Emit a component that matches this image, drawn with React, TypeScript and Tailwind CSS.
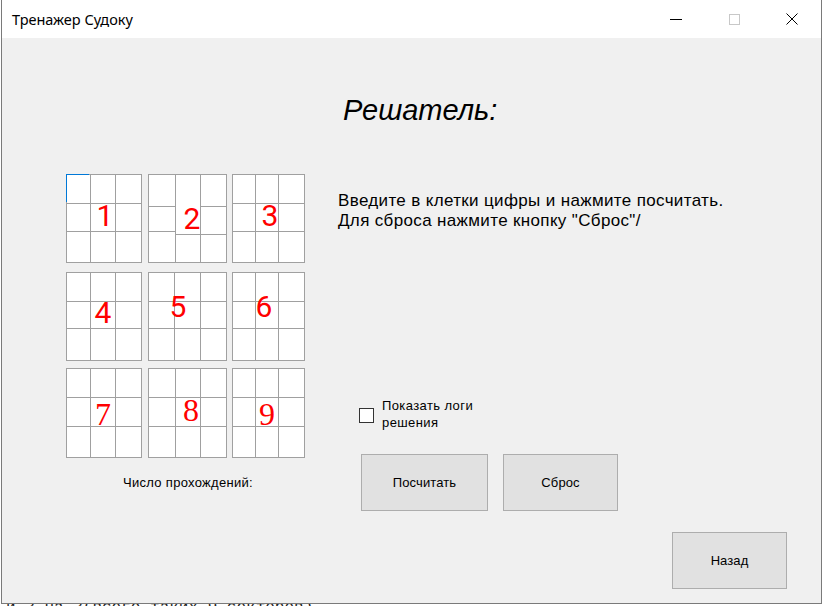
import React from 'react';

type Block = {
    cols: number[];
    rows: number[][];
    num: string;
    nx: number;
    ny: number;
    serif?: boolean;
    focus?: boolean;
};

const r1 = [28, 27, 30];
const r2 = [28, 26, 31];
const r3 = [28, 28, 30];

const blockRows: Block[][] = [
    [
        { cols: [23, 24, 25], rows: [r1, r1, r1], num: '1', nx: 39, ny: 42, focus: true },
        { cols: [26, 24, 25], rows: [[31, 24, 30], [59, 27], [31, 27, 27]], num: '2', nx: 44, ny: 45 },
        { cols: [22, 22, 25], rows: [r1, r1, r1], num: '3', nx: 38, ny: 42 },
    ],
    [
        { cols: [23, 24, 25], rows: [r2, r2, r2], num: '4', nx: 37, ny: 41 },
        { cols: [25, 25, 25], rows: [r2, r2, r2], num: '5', nx: 30, ny: 35 },
        { cols: [22, 22, 25], rows: [r2, r2, r2], num: '6', nx: 32, ny: 35 },
    ],
    [
        { cols: [23, 24, 25], rows: [r3, r3, r3], num: '7', nx: 37, ny: 46, serif: true },
        { cols: [26, 24, 25], rows: [r3, r3, r3], num: '8', nx: 43, ny: 42, serif: true },
        { cols: [22, 22, 25], rows: [r3, r3, r3], num: '9', nx: 35, ny: 46, serif: true },
    ],
];

const Sector: React.FC<{ b: Block }> = ({ b }) => {
    return (
        <div className="relative flex gap-px bg-[#a0a0a0] p-px">
            {b.cols.map((w, i) => (
                <div key={i} className="flex flex-col gap-px" style={{ width: w }}>
                    {b.rows[i].map((h, j) => (
                        <div
                            key={j}
                            className={
                                b.focus && i === 0 && j === 0
                                    ? 'bg-white shadow-[-1px_-1px_0_0_#0078d7]'
                                    : 'bg-white'
                            }
                            style={{ height: h }}
                        />
                    ))}
                </div>
            ))}
            <span
                className={
                    b.serif
                        ? "absolute -translate-x-1/2 -translate-y-1/2 text-[32px] leading-none text-[#ff0000] font-['Liberation_Serif',serif]"
                        : "absolute -translate-x-1/2 -translate-y-1/2 text-[30px] leading-none text-[#ff0000] font-['Roboto',sans-serif]"
                }
                style={{ left: b.nx, top: b.ny }}
            >
                {b.num}
            </span>
        </div>
    );
};

const TitleBar: React.FC = () => {
    return (
        <div className="h-[38px] flex items-center bg-white">
            <span className="pl-[10px] text-[14.5px] leading-none text-black font-['Noto_Sans',sans-serif]">
                Тренажер Судоку
            </span>
            <div className="ml-auto flex h-full">
                <div className="w-[58px] h-full flex items-center justify-center">
                    <div className="w-[12px] h-px bg-black" />
                </div>
                <div className="w-[58px] h-full flex items-center justify-center">
                    <div className="w-[11px] h-[11px] border border-[#c8c8c8]" />
                </div>
                <div className="w-[58px] h-full flex items-center justify-center">
                    <svg width="12" height="12" viewBox="0 0 12 12">
                        <path d="M0.5 0.5 L11.5 11.5 M11.5 0.5 L0.5 11.5" stroke="#000" strokeWidth="1" fill="none" />
                    </svg>
                </div>
            </div>
        </div>
    );
};

const WinButton: React.FC<{ w: string; label: string }> = ({ w, label }) => {
    return (
        <button className={`${w} h-[57px] bg-[#e1e1e1] border border-[#adadad] text-[13px] tracking-[0.1px] text-black`}>
            {label}
        </button>
    );
};

const App: React.FC = () => {
    return (
        <div className="w-[823px] h-[606px] bg-white overflow-hidden font-['Liberation_Sans',Arial,sans-serif]">
            <div className="ml-px w-[821px] h-[604px] flex flex-col border-x border-b border-[#7a7a7a]">
                <TitleBar />
                <div className="flex-1 bg-[#f0f0f0] flex flex-col">
                    <h1 className="mt-[58px] ml-[341px] text-[29px] leading-none italic text-black">Решатель:</h1>

                    <div className="mt-[49px] flex items-start">
                        <div className="ml-[64px] flex flex-col">
                            <div className="flex flex-col">
                                {blockRows.map((row, i) => (
                                    <div
                                        key={i}
                                        className={i === 1 ? 'flex mt-[9px]' : i === 2 ? 'flex mt-[7px]' : 'flex'}
                                    >
                                        <Sector b={row[0]} />
                                        <div className="ml-[6px]">
                                            <Sector b={row[1]} />
                                        </div>
                                        <div className="ml-[5px]">
                                            <Sector b={row[2]} />
                                        </div>
                                    </div>
                                ))}
                            </div>
                            <p className="mt-[17px] pl-[57px] text-[13px] tracking-[0.3px] leading-[16px] text-black">
                                Число прохождений:
                            </p>
                        </div>

                        <div className="ml-[33px] flex flex-col">
                            <p className="mt-[17px] text-[17px] tracking-[0.35px] leading-[20px] text-black">
                                Введите в клетки цифры и нажмите посчитать.
                                <br />
                                Для сброса нажмите кнопку "Сброс"/
                            </p>
                            <div className="mt-[167px] flex items-start">
                                <div className="ml-[21px] mt-[10px] w-[15px] h-[15px] bg-white border border-[#333]" />
                                <p className="ml-[8px] text-[13px] tracking-[0.4px] leading-[16.5px] text-black">
                                    Показать логи
                                    <br />
                                    решения
                                </p>
                            </div>
                            <div className="mt-[23px] ml-[23px] flex gap-[15px]">
                                <WinButton w="w-[127px]" label="Посчитать" />
                                <WinButton w="w-[115px]" label="Сброс" />
                            </div>
                        </div>
                    </div>

                    <div className="mt-[21px] ml-[670px]">
                        <WinButton w="w-[115px]" label="Назад" />
                    </div>
                </div>
            </div>
            <div className="h-[2px] overflow-hidden pl-[6px]">
                <p className="-mt-[4px] text-[16px] leading-none text-[#1e1e1e] whitespace-nowrap font-['Liberation_Mono',monospace]">
                    и 3 на 3(всего таких 9 секторов).
                </p>
            </div>
        </div>
    );
};

export default App;
